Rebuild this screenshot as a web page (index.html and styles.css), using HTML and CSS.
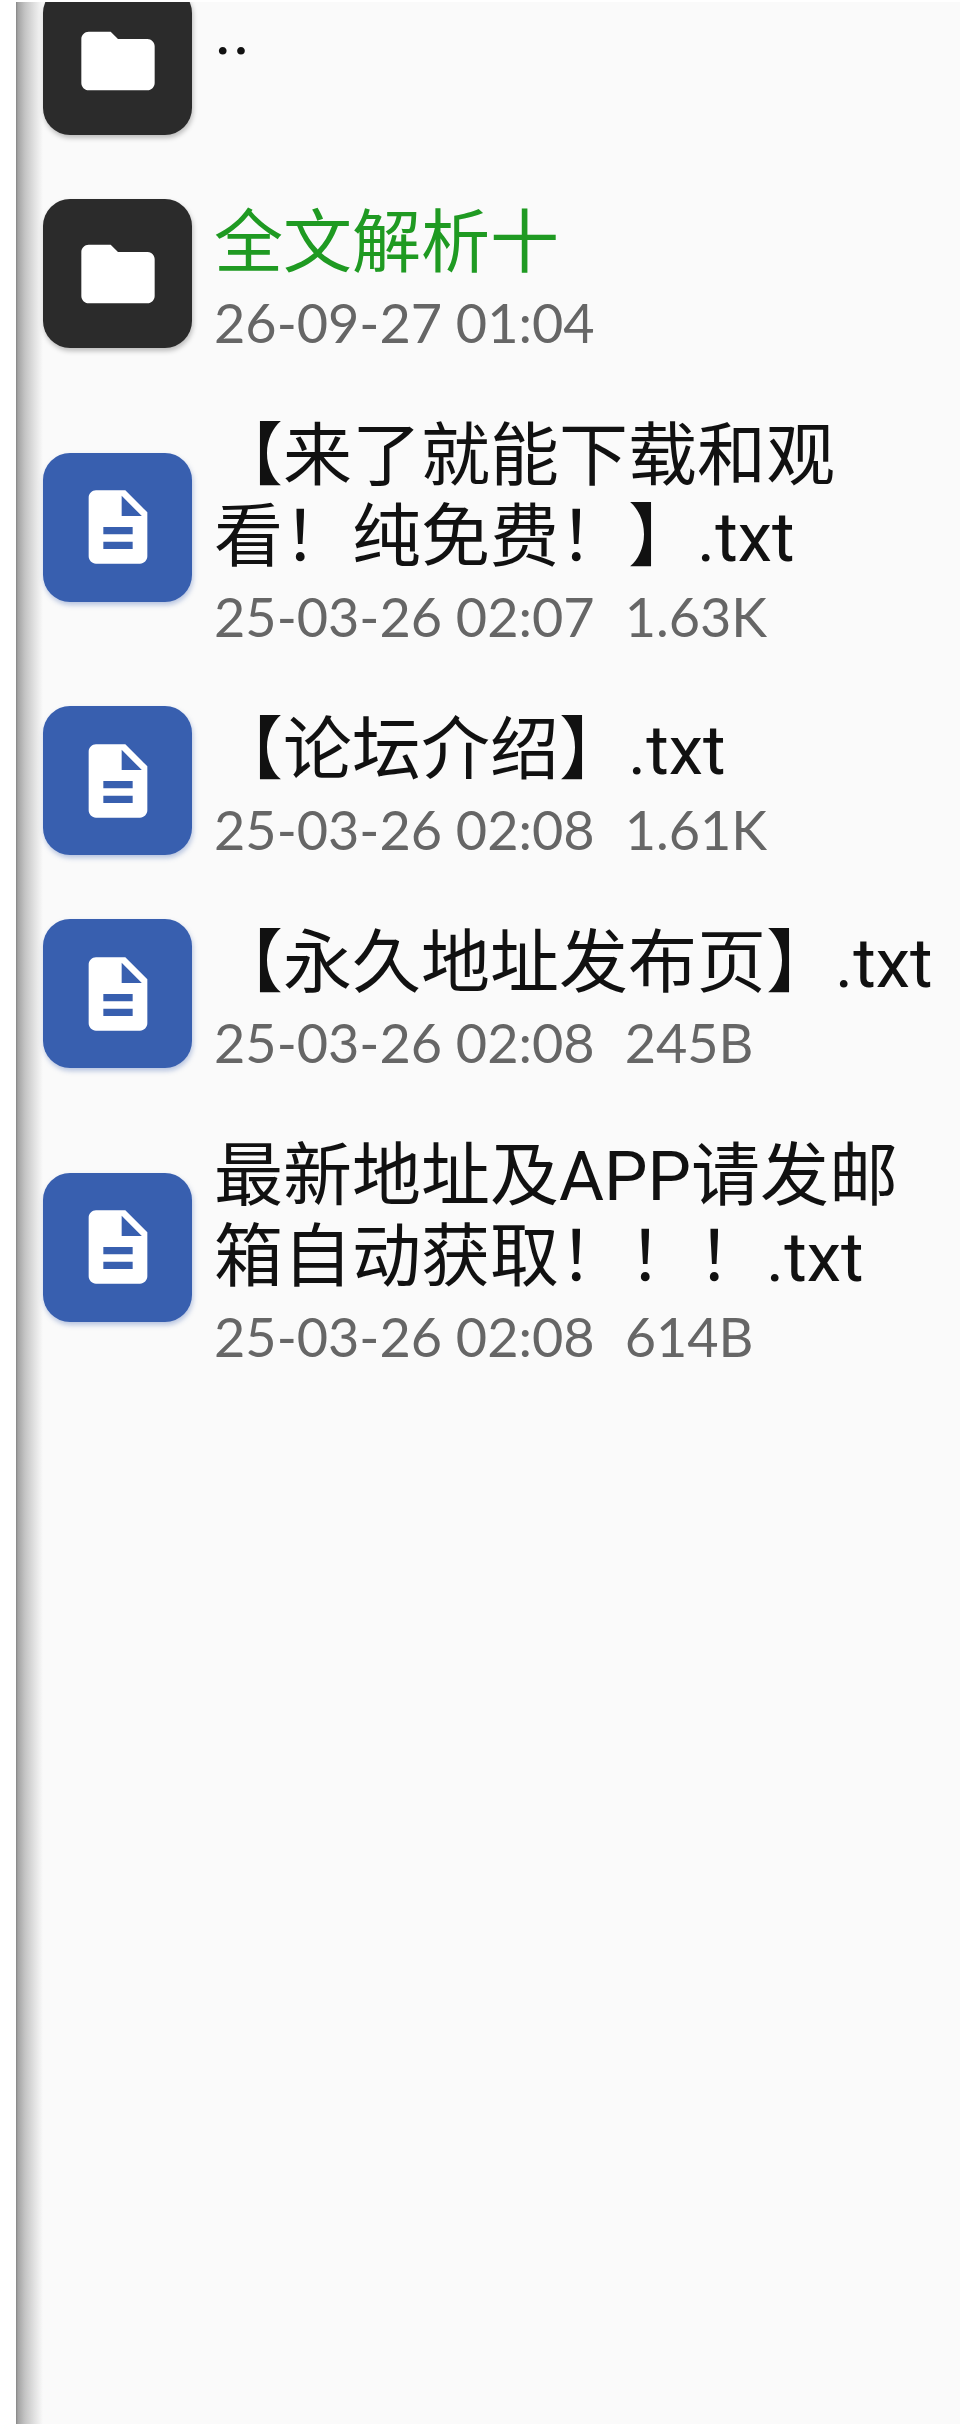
FILE: index.html
```html
<!DOCTYPE html>
<html lang="zh-CN">

<head>
    <meta charset="UTF-8">
    <meta name="viewport" content="width=device-width, initial-scale=1.0">
    <title>文件</title>
    <link rel="stylesheet" href="styles.css">
</head>

<body>
    <svg class="symbols" aria-hidden="true">
        <symbol id="folder" viewBox="0 0 24 24">
            <path d="M10 4H4c-1.1 0-2 .9-2 2v12c0 1.1.9 2 2 2h16c1.1 0 2-.9 2-2V8c0-1.1-.9-2-2-2h-8l-2-2z" />
        </symbol>
        <symbol id="document" viewBox="0 0 24 24">
            <path d="M14 2H6c-1.1 0-2 .9-2 2v16c0 1.1.9 2 2 2h12c1.1 0 2-.9 2-2V8l-6-6zm2 16H8v-2h8v2zm0-4H8v-2h8v2zm-3-5V3.5L18.5 9H13z" />
        </symbol>
    </svg>

    <main class="panel">
        <ul class="files">
            <li>
                <a class="file" href="#">
                    <span class="icon folder"><svg><use href="#folder" /></svg></span>
                    <span class="info">
                        <span class="name">..</span>
                        <span class="meta"></span>
                    </span>
                </a>
            </li>
            <li>
                <a class="file" href="#">
                    <span class="icon folder"><svg><use href="#folder" /></svg></span>
                    <span class="info">
                        <span class="name marked">全文解析十</span>
                        <span class="meta"><span>26-09-27 01:04</span></span>
                    </span>
                </a>
            </li>
            <li>
                <a class="file" href="#">
                    <span class="icon document"><svg><use href="#document" /></svg></span>
                    <span class="info">
                        <span class="name">【来了就能下载和观看！纯免费！】.txt</span>
                        <span class="meta"><span>25-03-26 02:07</span><span>1.63K</span></span>
                    </span>
                </a>
            </li>
            <li>
                <a class="file" href="#">
                    <span class="icon document"><svg><use href="#document" /></svg></span>
                    <span class="info">
                        <span class="name">【论坛介绍】.txt</span>
                        <span class="meta"><span>25-03-26 02:08</span><span>1.61K</span></span>
                    </span>
                </a>
            </li>
            <li>
                <a class="file" href="#">
                    <span class="icon document"><svg><use href="#document" /></svg></span>
                    <span class="info">
                        <span class="name">【永久地址发布页】.txt</span>
                        <span class="meta"><span>25-03-26 02:08</span><span>245B</span></span>
                    </span>
                </a>
            </li>
            <li>
                <a class="file" href="#">
                    <span class="icon document"><svg><use href="#document" /></svg></span>
                    <span class="info">
                        <span class="name">最新地址及APP请发邮箱自动获取！！！.txt</span>
                        <span class="meta"><span>25-03-26 02:08</span><span>614B</span></span>
                    </span>
                </a>
            </li>
        </ul>
    </main>
</body>

</html>
```
FILE: styles.css
```css
* {
    box-sizing: border-box;
}

body {
    margin: 0;
    padding: 2px 0 0 16px;
    background-color: #fff;
    font-family: Roboto, "Noto Sans CJK SC", sans-serif;
}

.symbols {
    display: none;
}

.panel {
    min-height: calc(100vh - 2px);
    padding-left: 27px;
    overflow: hidden;
    background: linear-gradient(to right, #858585 0, #a4a4a4 2px, #c4c4c4 9px, #e0e0e0 18px, #fafafa 27px) #fafafa;
}

/* the list is scrolled a little past its first row */
.files {
    list-style: none;
    margin: -48px 0 0;
    padding: 0;
}

.file {
    display: flex;
    align-items: center;
    gap: 22px;
    padding: 25px 14px 25px 0;
    color: #111;
    text-decoration: none;
}

.icon {
    flex: none;
    display: flex;
    align-items: center;
    justify-content: center;
    width: 149px;
    height: 149px;
    border-radius: 27px;
    box-shadow: 1px 3px 5px rgba(0, 0, 0, 0.25);
}

.icon svg {
    width: 88px;
    height: 88px;
    fill: #fff;
}

.icon.folder {
    background-color: #2b2b2b;
}

.icon.document {
    background-color: #385faf;
    box-shadow: 1px 3px 5px rgba(56, 95, 175, 0.35);
}

.info {
    flex: 1;
    min-width: 0;
    padding-top: 11px;
}

.name {
    display: block;
    font-size: 69px;
    line-height: 81px;
}

.name.marked {
    color: #1f9a22;
}

.meta {
    display: flex;
    gap: 30px;
    min-height: 64px;
    margin-top: 7px;
    font-family: Lato, sans-serif;
    font-size: 54px;
    line-height: 64px;
    color: #666;
}
```
